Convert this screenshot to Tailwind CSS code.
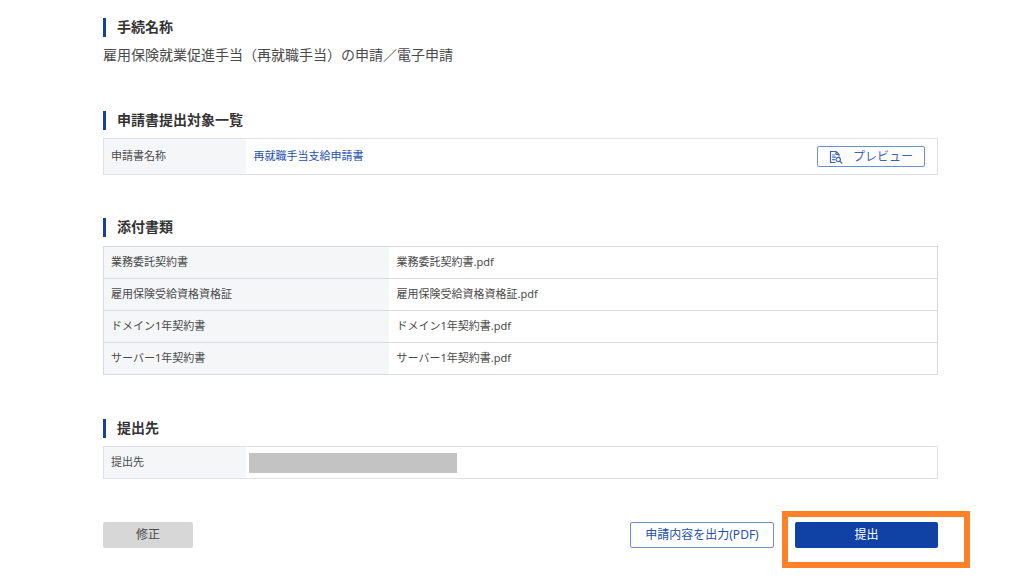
<!DOCTYPE html>
<html lang="ja">
<head>
<meta charset="utf-8">
<meta name="viewport" content="width=device-width, initial-scale=1">
<title>申請内容の確認</title>
<script src="https://cdn.jsdelivr.net/npm/@tailwindcss/browser@4"></script>
</head>
<body class="min-h-screen bg-white font-['Noto_Sans','Noto_Sans_CJK_JP',sans-serif] text-[11px] text-[#4a4a4a]">
<main class="pt-[18px] pr-[86px] pb-[35px] pl-[103px]">
  <section>
    <h2 class="h-[19px] border-l-3 border-[#1041a5] pl-[11px] text-sm leading-[17px] font-bold text-[#333]">手続名称</h2>
    <p class="mt-2 text-sm leading-5">雇用保険就業促進手当（再就職手当）の申請／電子申請</p>
  </section>

  <section class="mt-[46px]">
    <h2 class="h-[19px] border-l-3 border-[#1041a5] pl-[11px] text-sm leading-[17px] font-bold text-[#333]">申請書提出対象一覧</h2>
    <table class="mt-2 w-full table-fixed border-collapse border border-[#dfe0e8]">
      <tbody>
        <tr class="h-9">
          <th scope="row" class="w-[142px] bg-[#f4f6f8] px-[7px] text-left font-normal">申請書名称</th>
          <td class="pr-3 pl-2">
            <div class="flex items-center justify-between">
              <a href="#" class="text-[#2450ad]">再就職手当支給申請書</a>
              <button type="button" class="flex h-[21px] w-[108px] items-center justify-center gap-2.5 rounded-xs border border-[#6d8fd0] text-xs text-[#3b63b5]">
                <svg class="size-[14px]" viewBox="0 0 14 14" fill="none" stroke="currentColor" stroke-width="1.2" aria-hidden="true">
                  <path d="M6.5 12.5h-5v-11h5.7l2.8 2.8v2.2M7 1.5v3h3M3.2 5h2.6M3.2 7.2h3.6M3.2 9.6h2.6"/>
                  <circle cx="9.2" cy="9.5" r="2.2"/>
                  <path d="m10.8 11.1 2.4 2.4"/>
                </svg>
                プレビュー
              </button>
            </div>
          </td>
        </tr>
      </tbody>
    </table>
  </section>

  <section class="mt-[43px]">
    <h2 class="h-[19px] border-l-3 border-[#1041a5] pl-[11px] text-sm leading-[17px] font-bold text-[#333]">添付書類</h2>
    <table class="mt-[9px] w-full table-fixed border-collapse border border-[#d7d9e1]">
      <tbody class="divide-y divide-[#d7d9e1]">
        <tr class="h-8">
          <th scope="row" class="w-[285px] bg-[#f4f6f8] px-[7px] text-left font-normal">業務委託契約書</th>
          <td class="px-2">業務委託契約書.pdf</td>
        </tr>
        <tr class="h-8">
          <th scope="row" class="bg-[#f4f6f8] px-[7px] text-left font-normal">雇用保険受給資格資格証</th>
          <td class="px-2">雇用保険受給資格資格証.pdf</td>
        </tr>
        <tr class="h-8">
          <th scope="row" class="bg-[#f4f6f8] px-[7px] text-left font-normal">ドメイン1年契約書</th>
          <td class="px-2">ドメイン1年契約書.pdf</td>
        </tr>
        <tr class="h-8">
          <th scope="row" class="bg-[#f4f6f8] px-[7px] text-left font-normal">サーバー1年契約書</th>
          <td class="px-2">サーバー1年契約書.pdf</td>
        </tr>
      </tbody>
    </table>
  </section>

  <section class="mt-11">
    <h2 class="h-[19px] border-l-3 border-[#1041a5] pl-[11px] text-sm leading-[17px] font-bold text-[#333]">提出先</h2>
    <table class="mt-2 w-full table-fixed border-collapse border border-[#dfe0e8]">
      <tbody>
        <tr class="h-8">
          <th scope="row" class="w-[142px] bg-[#f4f6f8] px-[7px] text-left font-normal">提出先</th>
          <td class="pl-[3px]"><div class="h-5 w-[208px] bg-[#c3c3c3]"></div></td>
        </tr>
      </tbody>
    </table>
  </section>

  <div class="mt-[43px] flex h-[26px] items-stretch text-xs">
    <button type="button" class="w-[90px] rounded-xs bg-[#d7d7d7]">修正</button>
    <button type="button" class="mr-[21px] ml-auto w-36 rounded-xs border border-[#6d8fd0] text-[#2450ad]">申請内容を出力(PDF)</button>
    <div class="relative w-[143px]">
      <button type="button" class="size-full rounded-xs bg-[#1041a5] text-white">提出</button>
      <span class="pointer-events-none absolute -top-[11px] -right-8 -bottom-5 -left-[13px] border-6 border-[#ff8127]"></span>
    </div>
  </div>
</main>
</body>
</html>
